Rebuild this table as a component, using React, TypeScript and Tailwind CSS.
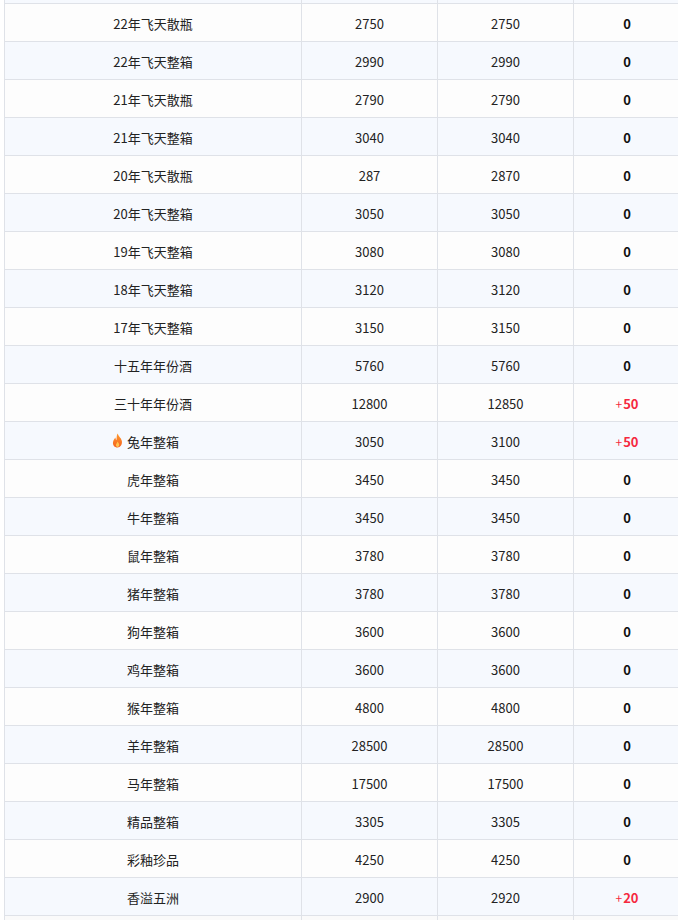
const rows: [string, string, string, string][] = [
  ["22年飞天散瓶", "2750", "2750", "0"],
  ["22年飞天整箱", "2990", "2990", "0"],
  ["21年飞天散瓶", "2790", "2790", "0"],
  ["21年飞天整箱", "3040", "3040", "0"],
  ["20年飞天散瓶", "287", "2870", "0"],
  ["20年飞天整箱", "3050", "3050", "0"],
  ["19年飞天整箱", "3080", "3080", "0"],
  ["18年飞天整箱", "3120", "3120", "0"],
  ["17年飞天整箱", "3150", "3150", "0"],
  ["十五年年份酒", "5760", "5760", "0"],
  ["三十年年份酒", "12800", "12850", "+50"],
  ["兔年整箱", "3050", "3100", "+50"],
  ["虎年整箱", "3450", "3450", "0"],
  ["牛年整箱", "3450", "3450", "0"],
  ["鼠年整箱", "3780", "3780", "0"],
  ["猪年整箱", "3780", "3780", "0"],
  ["狗年整箱", "3600", "3600", "0"],
  ["鸡年整箱", "3600", "3600", "0"],
  ["猴年整箱", "4800", "4800", "0"],
  ["羊年整箱", "28500", "28500", "0"],
  ["马年整箱", "17500", "17500", "0"],
  ["精品整箱", "3305", "3305", "0"],
  ["彩釉珍品", "4250", "4250", "0"],
  ["香溢五洲", "2900", "2920", "+20"],
];

// rows flagged as hot get the little flame in front of the name
const HOT = new Set(["兔年整箱"]);

function Flame() {
  return (
    <svg width="11" height="15" viewBox="0 0 10 14" className="absolute right-full top-[1px] mr-[4px]">
      <defs>
        <linearGradient id="fl" x1="0" y1="0" x2="0" y2="1">
          <stop offset="0" stopColor="#ff9a2e" />
          <stop offset="1" stopColor="#f4621f" />
        </linearGradient>
      </defs>
      <path
        d="M5.2 0.5C5.6 3 8.2 4.3 9 7.2C9.8 10.6 7.6 13.5 5 13.5C2.3 13.5 0.4 11.4 0.8 8.6C1.1 6.6 2.4 5.6 2.9 4.2C3.3 5.3 3.4 6.2 4 6.7C4.4 4.6 3.9 2.4 5.2 0.5Z"
        fill="url(#fl)"
      />
      <path d="M5 8C5.6 9.2 6.8 9.8 6.6 11.4C6.4 12.6 5.6 13 5 13C4.1 13 3.4 12.3 3.5 11.3C3.6 10.2 4.6 9.6 5 8Z" fill="#ffc14d" />
    </svg>
  );
}

function Diff({ v }: { v: string }) {
  if (v === "0") return <span className="font-bold text-[#111]">0</span>;
  return (
    <span className="font-bold text-[#f5293f]">
      <span className="mr-[1px] text-[12px] font-normal">+</span>
      {v.slice(1)}
    </span>
  );
}

const cell = "border border-[#dfe2e8] p-0 pt-[4px] text-center";

export default function App() {
  return (
    <div
      className="h-[920px] w-[678px] overflow-hidden bg-white pl-1"
      style={{ fontFamily: '"Noto Sans CJK SC", "Noto Sans", sans-serif' }}
    >
      <table className="w-[676px] table-fixed border-collapse text-[13px] text-[#222]">
        <colgroup>
          <col className="w-[297px]" />
          <col className="w-[136px]" />
          <col className="w-[136px]" />
          <col className="w-[107px]" />
        </colgroup>
        <tbody>
          <tr className="h-[3px] bg-[#f6f9fe]">
            <td className="border-x border-b border-[#dfe2e8] p-0" />
            <td className="border-x border-b border-[#dfe2e8] p-0" />
            <td className="border-x border-b border-[#dfe2e8] p-0" />
            <td className="border-x border-b border-[#dfe2e8] p-0" />
          </tr>
          {rows.map(([name, a, b, d], i) => (
            <tr key={name} className={`h-[38px] ${i % 2 === 0 ? "bg-[#fdfdfd]" : "bg-[#f6f9fe]"}`}>
              <td className={cell}>
                <span className="relative">
                  {HOT.has(name) && <Flame />}
                  {name}
                </span>
              </td>
              <td className={cell}>{a}</td>
              <td className={cell}>{b}</td>
              <td className={cell}>
                <Diff v={d} />
              </td>
            </tr>
          ))}
          <tr className="h-[38px] bg-[#fafafa]">
            <td className="border border-[#dfe2e8] p-0" />
            <td className="border border-[#dfe2e8] p-0" />
            <td className="border border-[#dfe2e8] p-0" />
            <td className="border border-[#dfe2e8] p-0" />
          </tr>
        </tbody>
      </table>
    </div>
  );
}
